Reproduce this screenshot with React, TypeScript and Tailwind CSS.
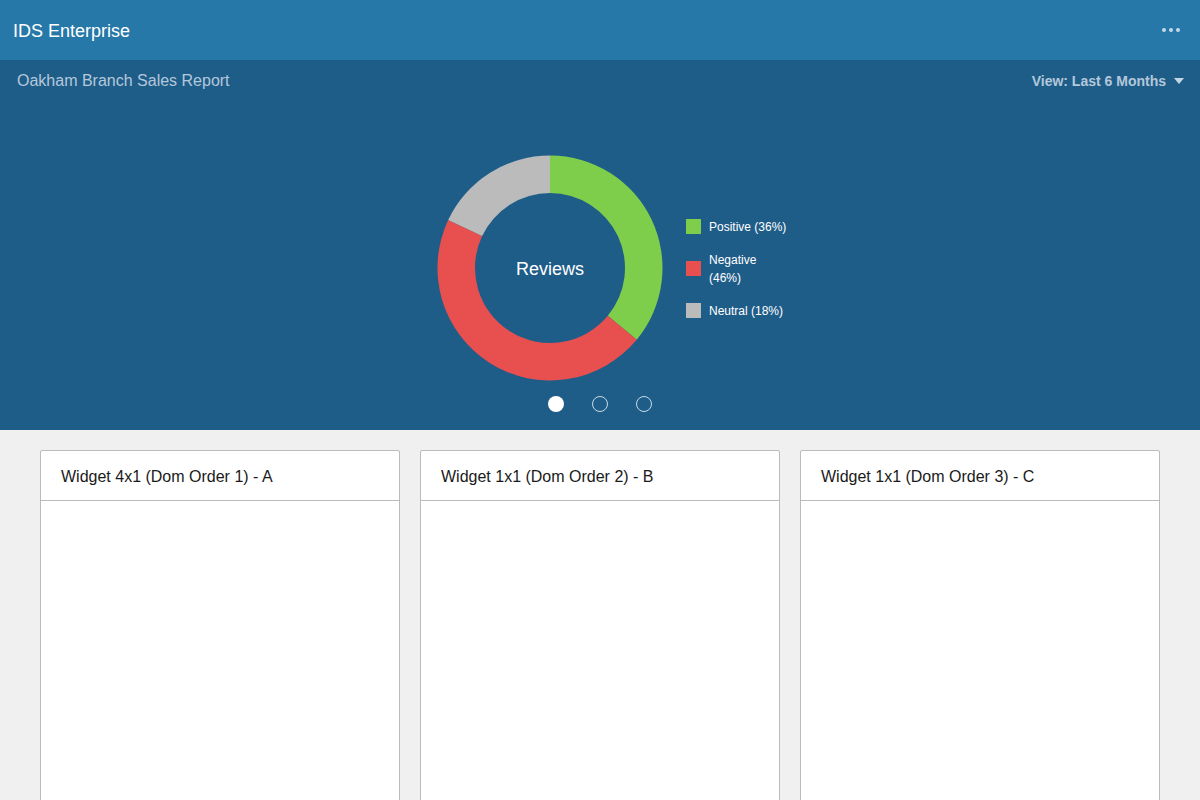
import React from "react"

// Review split for the donut
const slices = [
  { label: "Positive (36%)", value: 36, color: "#7ecd4b" },
  { label: "Negative (46%)", value: 46, color: "#e84f4f" },
  { label: "Neutral (18%)", value: 18, color: "#bbbbbb" },
]

const widgets = [
  "Widget 4x1 (Dom Order 1) - A",
  "Widget 1x1 (Dom Order 2) - B",
  "Widget 1x1 (Dom Order 3) - C",
]

function arcPath(cx: number, cy: number, r: number, ir: number, start: number, end: number) {
  const pt = (rad: number, a: number) => {
    const t = ((a - 90) * Math.PI) / 180
    return [cx + rad * Math.cos(t), cy + rad * Math.sin(t)]
  }
  const large = end - start > 180 ? 1 : 0
  const [x1, y1] = pt(r, start)
  const [x2, y2] = pt(r, end)
  const [x3, y3] = pt(ir, end)
  const [x4, y4] = pt(ir, start)
  return `M ${x1} ${y1} A ${r} ${r} 0 ${large} 1 ${x2} ${y2} L ${x3} ${y3} A ${ir} ${ir} 0 ${large} 0 ${x4} ${y4} Z`
}

function Donut() {
  let acc = 0
  return (
    <div className="relative w-[226px] h-[226px]">
      <svg width="226" height="226" viewBox="0 0 226 226">
        {slices.map((s) => {
          const start = (acc / 100) * 360
          acc += s.value
          const end = (acc / 100) * 360
          return <path key={s.label} d={arcPath(113, 113, 112.5, 75, start, end)} fill={s.color} />
        })}
      </svg>
      <div className="absolute inset-0 flex items-center justify-center pt-[2px] text-[18px] text-white">Reviews</div>
    </div>
  )
}

export default function App() {
  return (
    <div className="min-h-[800px] bg-[#f0f0f0] font-['Liberation_Sans',Arial,sans-serif]">
      <header className="h-[60px] bg-[#2678a9] flex items-center justify-between pl-[13px] pr-[20px]">
        <h1 className="pt-[2px] text-[18px] text-white">IDS Enterprise</h1>
        <div className="flex gap-[3px]">
          <span className="w-[4px] h-[4px] rounded-full bg-[#c6dbe9]" />
          <span className="w-[4px] h-[4px] rounded-full bg-[#c6dbe9]" />
          <span className="w-[4px] h-[4px] rounded-full bg-[#c6dbe9]" />
        </div>
      </header>

      <section className="h-[370px] bg-[#1f5d89] flex flex-col">
        <div className="h-[40px] flex items-center justify-between pt-[2px] pl-[17px] pr-[16px]">
          <h2 className="text-[16px] text-[#b4c8da]">Oakham Branch Sales Report</h2>
          <button className="flex items-center gap-[8px] text-[14px] font-bold text-[#b4c8da]">
            View: Last 6 Months
            <span className="w-0 h-0 border-l-[5px] border-r-[5px] border-t-[6px] border-l-transparent border-r-transparent border-t-[#c5d6e4]" />
          </button>
        </div>

        <div className="flex justify-center pt-[55px] pl-[24px]">
          <div className="flex items-center gap-[23px]">
            <Donut />
            <ul className="flex flex-col gap-[14px] w-[101px]">
              {slices.map((s) => (
                <li key={s.label} className="flex items-center gap-[8px]">
                  <span className="w-[15px] h-[15px] shrink-0" style={{ backgroundColor: s.color }} />
                  <span className="w-[80px] pt-[1px] text-[12px] leading-[18px] text-white">{s.label}</span>
                </li>
              ))}
            </ul>
          </div>
        </div>

        <div className="flex justify-center gap-[28px] pt-[15px]">
          <span className="w-[16px] h-[16px] rounded-full bg-white" />
          <span className="w-[16px] h-[16px] rounded-full border border-[#c6dbe9]" />
          <span className="w-[16px] h-[16px] rounded-full border border-[#c6dbe9]" />
        </div>
      </section>

      <main className="grid grid-cols-3 gap-[20px] px-[40px] pt-[20px]">
        {widgets.map((w) => (
          <div key={w} className="h-[400px] bg-white border border-[#bbbbbb] rounded-[2px]">
            <div className="h-[50px] flex items-center pt-[3px] px-[20px] border-b border-[#bbbbbb] text-[16px] text-[#1a1a1a]">
              {w}
            </div>
          </div>
        ))}
      </main>
    </div>
  )
}
